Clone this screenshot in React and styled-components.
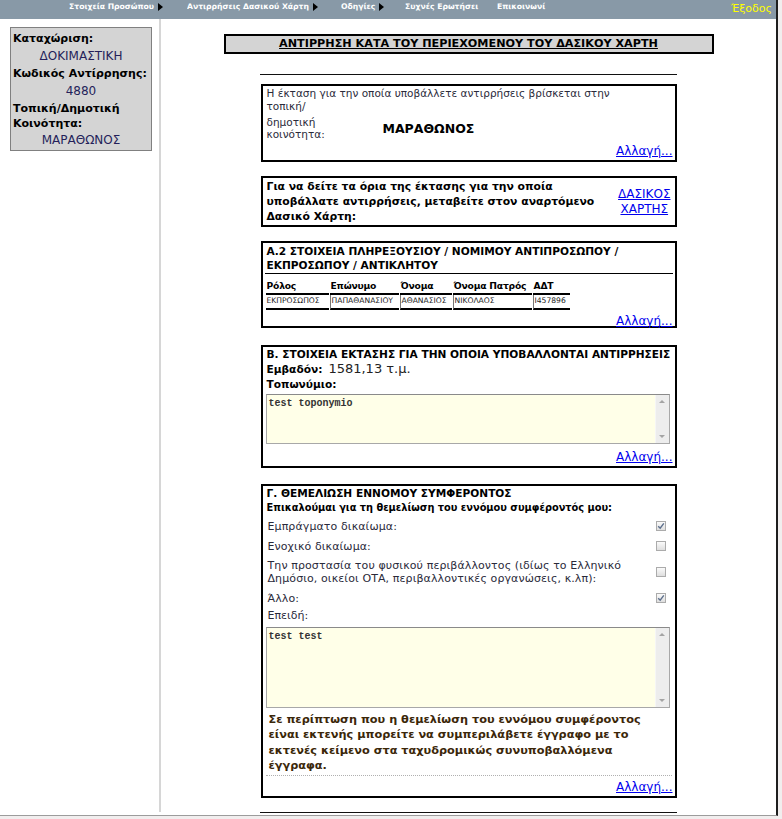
import styled, { createGlobalStyle } from 'styled-components'

const GlobalStyle = createGlobalStyle`
  html, body {
    margin: 0;
    padding: 0;
    background: #f1eeee;
  }
  body {
    font-family: 'DejaVu Sans', Verdana, sans-serif;
    color: #222;
  }
`

const Frame = styled.div`
  width: 776px;
  height: 815px;
  background: #fff;
  border-right: 2px solid #1e1e1e;
  border-bottom: 1px solid #9c9c9c;
  overflow: hidden;
  display: flex;
  flex-direction: column;
`

const NavBar = styled.div`
  height: 19px;
  flex-shrink: 0;
  background: #8899a7;
  display: flex;
  align-items: flex-start;
  padding-left: 69px;
  padding-right: 4px;
`

const NavItem = styled.div`
  width: ${(p) => p.w}px;
  flex-shrink: 0;
  display: flex;
  align-items: center;
  gap: 4px;
  padding-top: 3px;
  font-size: 7.7px;
  line-height: 8px;
  font-weight: bold;
  color: #fff;
  white-space: nowrap;
  overflow: hidden;
`

const Arrow = styled.span`
  width: 0;
  height: 0;
  border-top: 4px solid transparent;
  border-bottom: 4px solid transparent;
  border-left: 5px solid #000;
`

const Exit = styled.div`
  margin-left: auto;
  padding-top: 2px;
  font-size: 11px;
  line-height: 13px;
  color: #ffff00;
`

const Columns = styled.div`
  display: flex;
  align-items: flex-start;
`

const Sidebar = styled.div`
  width: 161px;
  height: 793px;
  flex-shrink: 0;
  border-right: 2px solid #d6d6d6;
  padding: 8px 0 0 10px;
  box-sizing: border-box;
`

const InfoBox = styled.div`
  width: 142px;
  height: 124px;
  box-sizing: border-box;
  border: 1px solid #808080;
  background: #d4d4d4;
  padding: 2px 2px 0;
`

const InfoLabel = styled.div`
  font-size: 11px;
  font-weight: bold;
  color: #000;
  line-height: ${(p) => (p.multi ? 15 : 17)}px;
  margin-top: ${(p) => (p.multi ? 1 : 0)}px;
`

const InfoValue = styled.div`
  font-size: 12px;
  line-height: 18px;
  text-align: center;
  color: #241f5a;
`

const Main = styled.div`
  flex: 1;
  display: flex;
  flex-direction: column;
  align-items: center;
  padding-top: 15px;
`

const TitleBox = styled.div`
  width: 490px;
  height: 20px;
  box-sizing: border-box;
  border: 2px solid #000;
  background: #d4d4d4;
  text-align: center;
  font-size: 11.2px;
  line-height: 16px;
  font-weight: bold;
  text-decoration: underline;
  color: #000;
`

const Rule = styled.div`
  width: 417px;
  height: 1px;
  background: #111;
  margin-top: ${(p) => p.top}px;
`

const Box = styled.div`
  width: 416px;
  height: ${(p) => p.h}px;
  margin-top: ${(p) => p.top}px;
  box-sizing: border-box;
  border: 2px solid #000;
  padding: 0 2px;
  display: flex;
  flex-direction: column;
`

const Link = styled.a`
  color: #0000ee;
  text-decoration: underline;
  font-size: 12px;
  line-height: 14px;
  cursor: pointer;
`

const Footer = styled.div`
  margin-top: auto;
  text-align: right;
  padding-bottom: ${(p) => p.pb || 1}px;
`

const Plain = styled.div`
  font-size: 10.5px;
  line-height: 13px;
  color: #2a2a3a;
  padding-left: 2px;
  padding-top: ${(p) => p.pt || 0}px;
  white-space: nowrap;
`

const PlaceRow = styled.div`
  display: flex;
  align-items: center;
  margin-top: 3px;
`

const PlaceLabel = styled.div`
  width: 116px;
  font-size: 10.5px;
  line-height: 12px;
  color: #2a2a3a;
  padding-left: 2px;
`

const PlaceValue = styled.div`
  font-size: 12.5px;
  font-weight: bold;
  color: #000;
`

const MapRow = styled.div`
  flex: 1;
  display: flex;
  align-items: center;
  justify-content: space-between;
  padding: 0 2px;
`

const BoldText = styled.div`
  font-size: 10.8px;
  line-height: 15px;
  font-weight: bold;
  color: #000;
  white-space: nowrap;
`

const MapLink = styled(Link)`
  text-align: center;
  line-height: 15px;
`

const Heading = styled.div`
  font-size: ${(p) => p.fs || 10.6}px;
  line-height: ${(p) => p.lh || 14}px;
  font-weight: bold;
  color: #000;
  padding-left: 2px;
  white-space: nowrap;
  border-bottom: ${(p) => (p.ruled ? '1px solid #000' : 'none')};
  padding-bottom: ${(p) => (p.ruled ? 1 : 0)}px;
  padding-top: ${(p) => p.pt || 0}px;
`

const PeopleTable = styled.table`
  border-collapse: separate;
  border-spacing: 1px 0;
  table-layout: fixed;
  width: 305px;
  margin-top: 5px;
  margin-left: 0;
`

const Th = styled.th`
  width: ${(p) => p.w}px;
  text-align: left;
  font-size: 9.2px;
  letter-spacing: -0.2px;
  line-height: 13px;
  font-weight: bold;
  color: #000;
  padding: 0 0 1px 1px;
  border-bottom: 2px solid #000;
  white-space: nowrap;
  overflow: visible;
`

const Td = styled.td`
  font-size: 7.6px;
  line-height: 12px;
  color: #222;
  padding: 0 1px 1px;
  border-bottom: 2px solid #000;
  border-left: ${(p) => (p.first ? 'none' : '1px solid #777')};
  white-space: nowrap;
  overflow: hidden;
`

const AreaRow = styled.div`
  display: flex;
  align-items: baseline;
  gap: 6px;
  padding-left: 2px;
  line-height: 16px;
`

const AreaLabel = styled.span`
  font-size: 10.6px;
  font-weight: bold;
  color: #000;
`

const AreaValue = styled.span`
  font-size: 13px;
  color: #222;
`

const Field = styled.div`
  width: 404px;
  height: ${(p) => p.h}px;
  margin: ${(p) => p.top}px 0 0 1px;
  box-sizing: border-box;
  border: 1px solid #a8a8a8;
  border-top-color: #8a8a8a;
  background: #ffffe8;
  display: flex;
  flex-shrink: 0;
`

const FieldText = styled.div`
  flex: 1;
  font-family: 'Liberation Mono', 'Courier New', monospace;
  font-size: 10px;
  font-weight: bold;
  color: #333;
  padding: 3px 2px;
`

const ScrollTrack = styled.div`
  width: 13px;
  background: #ededed;
  border-left: 1px solid #f6f6f6;
  display: flex;
  flex-direction: column;
  justify-content: space-between;
  align-items: center;
  padding: 5px 0;
`

const ScrollArrow = styled.span`
  width: 0;
  height: 0;
  border-left: 3px solid transparent;
  border-right: 3px solid transparent;
  ${(p) =>
    p.down ? 'border-top: 3px solid #a4a4a4;' : 'border-bottom: 3px solid #a4a4a4;'}
`

const CheckRow = styled.div`
  display: flex;
  align-items: center;
  justify-content: space-between;
  min-height: ${(p) => p.h || 20}px;
  padding: 0 7px 0 3px;
  font-size: 11px;
  line-height: 13px;
  color: #2a2a3a;
  letter-spacing: 0.1px;
  white-space: nowrap;
`

const CheckBox = styled.span`
  width: 10px;
  height: 10px;
  box-sizing: border-box;
  border: 1px solid #ababab;
  background: linear-gradient(#fafafa, #dedede);
  display: flex;
  align-items: center;
  justify-content: center;
  flex-shrink: 0;
`

const Because = styled.div`
  font-size: 11px;
  line-height: 14px;
  color: #2a2a3a;
  padding-left: 3px;
  margin-top: 1px;
`

const Notice = styled.div`
  font-size: 11.3px;
  line-height: 15.3px;
  font-weight: bold;
  color: #3b2709;
  padding: 4px 0 2px 4px;
  white-space: nowrap;
`

const Dotted = styled.div`
  border-top: 1px dotted #b0b0b0;
  margin: 0 1px;
`

function Check({ checked }) {
  return (
    <CheckBox>
      {checked && (
        <svg width="8" height="8" viewBox="0 0 8 8">
          <path d="M1.2 4.2 L3.2 6.2 L6.8 1.4" fill="none" stroke="#5d6f8c" strokeWidth="1.4" />
        </svg>
      )}
    </CheckBox>
  )
}

function TextField({ h, top, text }) {
  return (
    <Field h={h} top={top}>
      <FieldText>{text}</FieldText>
      <ScrollTrack>
        <ScrollArrow />
        <ScrollArrow down />
      </ScrollTrack>
    </Field>
  )
}

const people = [
  ['ΕΚΠΡΟΣΩΠΟΣ', 'ΠΑΠΑΘΑΝΑΣΙΟΥ', 'ΑΘΑΝΑΣΙΟΣ', 'ΝΙΚΟΛΑΟΣ', 'I457896'],
]

export default function App() {
  return (
    <>
      <GlobalStyle />
      <Frame>
        <NavBar>
          <NavItem w={118}>Στοιχεία Προσώπου <Arrow /></NavItem>
          <NavItem w={154}>Αντιρρήσεις Δασικού Χάρτη <Arrow /></NavItem>
          <NavItem w={64}>Οδηγίες <Arrow /></NavItem>
          <NavItem w={92}>Συχνές Ερωτήσει</NavItem>
          <NavItem w={60}>Επικοινωνί</NavItem>
          <Exit>Έξοδος</Exit>
        </NavBar>
        <Columns>
          <Sidebar>
            <InfoBox>
              <InfoLabel>Καταχώριση:</InfoLabel>
              <InfoValue>ΔΟΚΙΜΑΣΤΙΚΗ</InfoValue>
              <InfoLabel>Κωδικός Αντίρρησης:</InfoLabel>
              <InfoValue>4880</InfoValue>
              <InfoLabel multi>Τοπική/Δημοτική<br />Κοινότητα:</InfoLabel>
              <InfoValue>ΜΑΡΑΘΩΝΟΣ</InfoValue>
            </InfoBox>
          </Sidebar>
          <Main>
            <TitleBox>ΑΝΤΙΡΡΗΣΗ ΚΑΤΑ ΤΟΥ ΠΕΡΙΕΧΟΜΕΝΟΥ ΤΟΥ ΔΑΣΙΚΟΥ ΧΑΡΤΗ</TitleBox>
            <Rule top={20} />

            <Box h={78} top={9}>
              <Plain pt={1}>
                Η έκταση για την οποία υποβάλλετε αντιρρήσεις βρίσκεται στην<br />τοπική/
              </Plain>
              <PlaceRow>
                <PlaceLabel>δημοτική<br />κοινότητα:</PlaceLabel>
                <PlaceValue>ΜΑΡΑΘΩΝΟΣ</PlaceValue>
              </PlaceRow>
              <Footer pb={2}><Link>Αλλαγή...</Link></Footer>
            </Box>

            <Box h={51} top={14}>
              <MapRow>
                <BoldText>
                  Για να δείτε τα όρια της έκτασης για την οποία<br />
                  υποβάλλατε αντιρρήσεις, μεταβείτε στον αναρτόμενο<br />
                  Δασικό Χάρτη:
                </BoldText>
                <MapLink>ΔΑΣΙΚΟΣ<br />ΧΑΡΤΗΣ</MapLink>
              </MapRow>
            </Box>

            <Box h={87} top={14}>
              <Heading ruled pt={1}>
                Α.2 ΣΤΟΙΧΕΙΑ ΠΛΗΡΕΞΟΥΣΙΟΥ / ΝΟΜΙΜΟΥ ΑΝΤΙΠΡΟΣΩΠΟΥ /<br />
                ΕΚΠΡΟΣΩΠΟΥ / ΑΝΤΙΚΛΗΤΟΥ
              </Heading>
              <PeopleTable>
                <thead>
                  <tr>
                    <Th w={62}>Ρόλος</Th>
                    <Th w={68}>Επώνυμο</Th>
                    <Th w={51}>Όνομα</Th>
                    <Th w={78}>Όνομα Πατρός</Th>
                    <Th w={36}>ΑΔΤ</Th>
                  </tr>
                </thead>
                <tbody>
                  {people.map((row) => (
                    <tr key={row[4]}>
                      {row.map((cell, i) => (
                        <Td key={i} first={i === 0}>{cell}</Td>
                      ))}
                    </tr>
                  ))}
                </tbody>
              </PeopleTable>
              <Footer pb={2}><Link>Αλλαγή...</Link></Footer>
            </Box>

            <Box h={123} top={17}>
              <Heading>Β. ΣΤΟΙΧΕΙΑ ΕΚΤΑΣΗΣ ΓΙΑ ΤΗΝ ΟΠΟΙΑ ΥΠΟΒΑΛΛΟΝΤΑΙ ΑΝΤΙΡΡΗΣΕΙΣ</Heading>
              <AreaRow>
                <AreaLabel>Εμβαδόν:</AreaLabel>
                <AreaValue>1581,13 τ.μ.</AreaValue>
              </AreaRow>
              <Heading>Τοπωνύμιο:</Heading>
              <TextField h={50} top={3} text="test toponymio" />
              <Footer pb={0}><Link>Αλλαγή...</Link></Footer>
            </Box>

            <Box h={314} top={16}>
              <Heading lh={14}>Γ. ΘΕΜΕΛΙΩΣΗ ΕΝΝΟΜΟΥ ΣΥΜΦΕΡΟΝΤΟΣ</Heading>
              <Heading lh={16} fs={9.8}>Επικαλούμαι για τη θεμελίωση του εννόμου συμφέροντός μου:</Heading>
              <CheckRow>
                Εμπράγματο δικαίωμα:
                <Check checked />
              </CheckRow>
              <CheckRow>
                Ενοχικό δικαίωμα:
                <Check />
              </CheckRow>
              <CheckRow h={32}>
                <span>
                  Την προστασία του φυσικού περιβάλλοντος (ιδίως το Ελληνικό<br />
                  Δημόσιο, οικείοι ΟΤΑ, περιβαλλοντικές οργανώσεις, κ.λπ):
                </span>
                <Check />
              </CheckRow>
              <CheckRow>
                Άλλο:
                <Check checked />
              </CheckRow>
              <Because>Επειδή:</Because>
              <TextField h={81} top={4} text="test test" />
              <Notice>
                Σε περίπτωση που η θεμελίωση του εννόμου συμφέροντος<br />
                είναι εκτενής μπορείτε να συμπεριλάβετε έγγραφο με το<br />
                εκτενές κείμενο στα ταχυδρομικώς συνυποβαλλόμενα<br />
                έγγραφα.
              </Notice>
              <Dotted />
              <Footer pb={0}><Link>Αλλαγή...</Link></Footer>
            </Box>

            <Rule top={14} />
          </Main>
        </Columns>
      </Frame>
    </>
  )
}
